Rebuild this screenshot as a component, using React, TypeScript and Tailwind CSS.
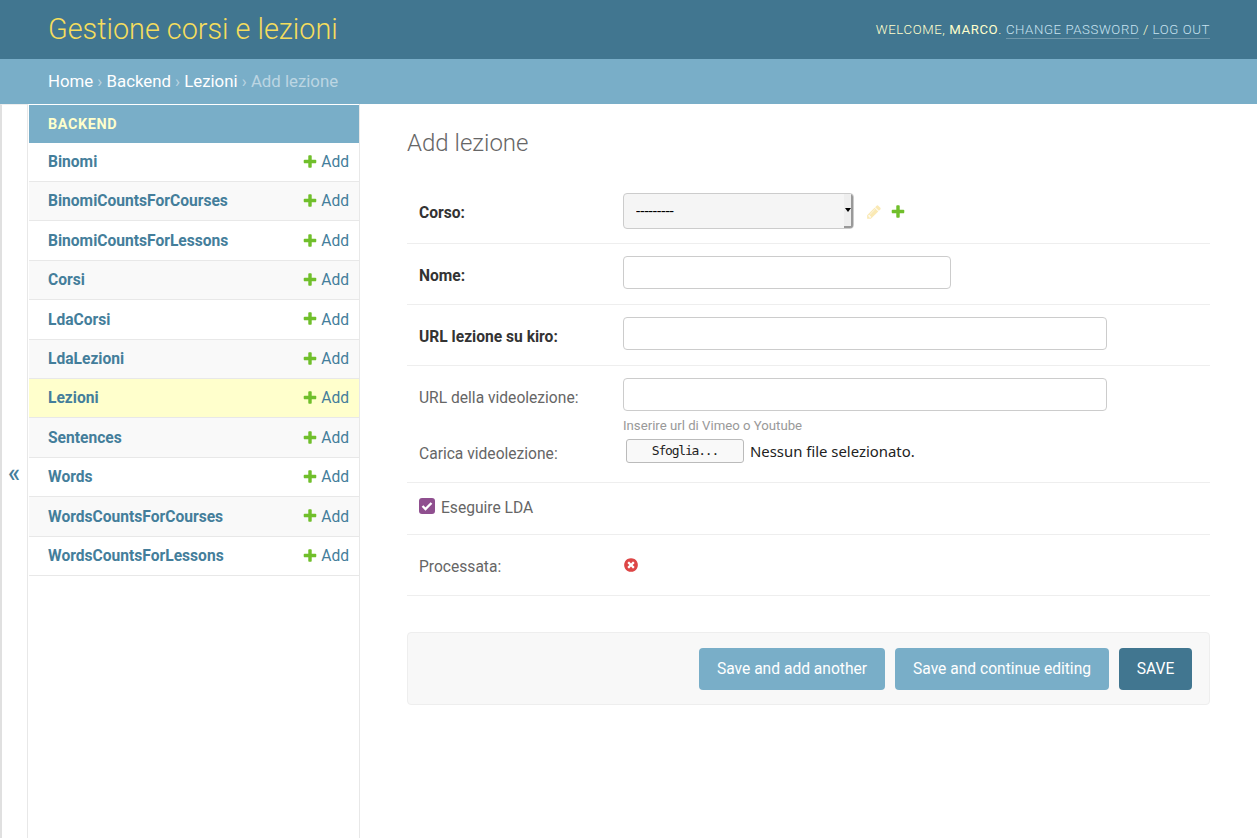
const models = [
  "Binomi",
  "BinomiCountsForCourses",
  "BinomiCountsForLessons",
  "Corsi",
  "LdaCorsi",
  "LdaLezioni",
  "Lezioni",
  "Sentences",
  "Words",
  "WordsCountsForCourses",
  "WordsCountsForLessons",
];

function PlusIcon() {
  return (
    <svg width="16" height="16" viewBox="0 0 1792 1792" aria-hidden="true">
      <path
        fill="#70bf2b"
        d="M1600 736v192q0 40-28 68t-68 28h-416v416q0 40-28 68t-68 28h-192q-40 0-68-28t-28-68v-416h-416q-40 0-68-28t-28-68v-192q0-40 28-68t68-28h416v-416q0-40 28-68t68-28h192q40 0 68 28t28 68v416h416q40 0 68 28t28 68z"
      />
    </svg>
  );
}

function PencilIcon() {
  return (
    <svg width="16" height="16" viewBox="0 0 1792 1792" aria-hidden="true" className="opacity-30">
      <path
        fill="#efb80b"
        d="M491 1536l91-91-235-235-91 91v107h128v128h107zm523-928q0-22-22-22-10 0-17 7l-542 542q-7 7-7 17 0 22 22 22 10 0 17-7l542-542q7-7 7-17zm-54-192l416 416-832 832h-416v-416zm683 96q0 53-37 90l-166 166-416-416 166-165q36-38 90-38 53 0 91 38l235 234q37 39 37 91z"
      />
    </svg>
  );
}

function NoIcon() {
  return (
    <svg width="16" height="16" viewBox="0 0 1792 1792" aria-hidden="true">
      <path
        fill="#dd4646"
        d="M1277 1122q0-26-19-45l-181-181 181-181q19-19 19-45 0-27-19-46l-90-90q-19-19-46-19-26 0-45 19l-181 181-181-181q-19-19-45-19-27 0-46 19l-90 90q-19 19-19 46 0 26 19 45l181 181-181 181q-19 19-19 45 0 27 19 46l90 90q19 19 46 19 26 0 45-19l181-181 181 181q19 19 45 19 27 0 46-19l90-90q19-19 19-46zm387-226q0 209-103 385.5t-279.5 279.5-385.5 103-385.5-103-279.5-279.5-103-385.5 103-385.5 279.5-279.5 385.5-103 385.5 103 279.5 279.5 103 385.5z"
      />
    </svg>
  );
}

function Sidebar() {
  return (
    <div className="ml-px w-[331px] shrink-0 border-r border-[#e8e8e8] pt-px">
      <div className="h-[37.6px] bg-[#79aec8] pt-px pl-[19px] text-[14.4px] leading-[38px] font-bold tracking-[0.6px] text-[#ffc]">
        BACKEND
      </div>
      {models.map((name, i) => (
        <div
          key={name}
          className={`flex h-[39.4px] items-center justify-between border-b border-[#e8e8e8] pt-[2px] pr-[10px] pl-[19px] text-[15.6px] ${
            name === "Lezioni" ? "bg-[#ffffcc]" : i % 2 === 1 ? "bg-[#f9f9f9]" : "bg-white"
          }`}
        >
          <a className="font-bold text-[#447e9b]">{name}</a>
          <span className="flex items-center gap-[3px] text-[#447e9b]">
            <span className="-mt-[2px]">
              <PlusIcon />
            </span>
            Add
          </span>
        </div>
      ))}
    </div>
  );
}

export default function App() {
  return (
    <div className="flex min-h-[838px] flex-col bg-white font-['Roboto',sans-serif] text-[#333]">
      {/* Header */}
      <div className="flex h-[59px] items-center justify-between bg-[#417690] pr-[47px] pl-[48px]">
        <h1 className="text-[28.8px] font-light text-[#f5dd5d]">Gestione corsi e lezioni</h1>
        <div className="text-[13.2px] font-light tracking-[0.6px] text-[#ffc]">
          WELCOME, <strong className="font-normal">MARCO</strong>.{" "}
          <a className="border-b border-white/25 pb-px text-[#c8e2ef]">CHANGE PASSWORD</a> /{" "}
          <a className="border-b border-white/25 pb-px text-[#c8e2ef]">LOG OUT</a>
        </div>
      </div>

      {/* Breadcrumbs */}
      <div className="flex h-[45px] items-center bg-[#79aec8] pl-[48px] text-[16.8px] whitespace-pre text-white/50">
        <a className="text-white">Home</a>
        {" › "}
        <a className="text-white">Backend</a>
        {" › "}
        <a className="text-white">Lezioni</a>
        {" › "}
        <span>Add lezione</span>
      </div>

      <div className="flex flex-1">
        {/* Toggle */}
        <div className="flex w-[28px] shrink-0 items-center justify-center border-t border-r border-l-2 border-t-[#eee] border-r-[#e8e8e8] border-l-[#e0e0e0] pt-[4px] pr-px text-[25px] leading-none font-medium text-[#447e9b]">
          «
        </div>

        <Sidebar />

        {/* Content */}
        <div className="flex-1 pt-[24px] pr-[47px] pl-[47px]">
          <h2 className="mb-[24px] h-[30px] text-[24px] leading-[30px] font-light text-[#666]">Add lezione</h2>

          <div className="text-[15.6px]">
            <div className="flex h-[62px] items-start border-b border-[#eee] px-3 pt-[11px]">
              <label className="w-[204px] shrink-0 pt-[9px] font-bold">Corso:</label>
              <div className="relative h-[36px] w-[231px] overflow-hidden rounded-[4px] border border-[#ccc] bg-[#f5f5f5]">
                <select className="h-full w-full appearance-none pl-[12px] text-[15.2px] text-black outline-none">
                  <option>---------</option>
                </select>
                <div className="absolute top-0 right-0 bottom-0 flex w-[9px] items-center justify-center border-r-2 border-b-2 border-[#999] bg-[#eee]">
                  <div className="h-0 w-0 border-x-[3px] border-t-[4px] border-x-transparent border-t-black" />
                </div>
              </div>
              <span className="mt-[11px] ml-[12px]">
                <PencilIcon />
              </span>
              <span className="mt-[11px] ml-[8px]">
                <PlusIcon />
              </span>
            </div>

            <div className="flex h-[61px] items-start border-b border-[#eee] px-3 pt-[12px]">
              <label className="w-[204px] shrink-0 pt-[9px] font-bold">Nome:</label>
              <input className="h-[33px] w-[328px] rounded-[4px] border border-[#ccc]" />
            </div>

            <div className="flex h-[61px] items-start border-b border-[#eee] px-3 pt-[12px]">
              <label className="w-[204px] shrink-0 pt-[9px] font-bold">URL lezione su kiro:</label>
              <input className="h-[33px] w-[484px] rounded-[4px] border border-[#ccc]" />
            </div>

            <div className="h-[117px] border-b border-[#eee] px-3 pt-[12px]">
              <div className="flex items-start">
                <label className="w-[204px] shrink-0 pt-[9px] text-[#666]">URL della videolezione:</label>
                <div>
                  <input className="block h-[33px] w-[484px] rounded-[4px] border border-[#ccc]" />
                  <p className="mt-[7px] text-[13.2px] leading-[15px] text-[#999]">Inserire url di Vimeo o Youtube</p>
                </div>
              </div>
              <div className="mt-[6px] flex items-start">
                <label className="w-[204px] shrink-0 pt-[4px] text-[#666]">Carica videolezione:</label>
                <button className="ml-[3px] h-[24px] w-[118px] rounded-[3px] border border-[#bbb] bg-[#f9f9f9] font-['DejaVu_Sans_Mono',monospace] text-[13px] tracking-[-1.2px] text-[#222]">
                  Sfoglia...
                </button>
                <span className="ml-[6px] font-['Noto_Sans',sans-serif] text-[14.9px] leading-[24px] text-[#222]">
                  Nessun file selezionato.
                </span>
              </div>
            </div>

            <div className="flex h-[52px] items-start border-b border-[#eee] px-3 pt-[15px]">
              <span className="flex h-[16px] w-[16px] items-center justify-center rounded-[3px] bg-[#8f4f8f]">
                <svg width="14" height="14" viewBox="0 0 14 14" fill="none" stroke="white" strokeWidth="2.4" aria-hidden="true">
                  <path d="M2.5 7l3 3 6-6" />
                </svg>
              </span>
              <label className="mt-[2px] ml-[6px] leading-[16px] text-[#666]">Eseguire LDA</label>
            </div>

            <div className="flex h-[61px] items-start border-b border-[#eee] px-3 pt-[22px]">
              <label className="w-[204px] shrink-0 leading-[20px] text-[#666]">Processata:</label>
              <span>
                <NoIcon />
              </span>
            </div>
          </div>

          {/* Submit row */}
          <div className="mt-[36px] flex h-[73px] items-center justify-end gap-[10px] rounded-[4px] border border-[#eee] bg-[#f8f8f8] pr-[17px] text-[15.6px] text-white">
            <button className="h-[42px] w-[186px] rounded-[4px] bg-[#79aec8] pt-[2px]">Save and add another</button>
            <button className="h-[42px] w-[214px] rounded-[4px] bg-[#79aec8] pt-[2px]">Save and continue editing</button>
            <button className="h-[42px] w-[73px] rounded-[4px] bg-[#417690] pt-[2px]">SAVE</button>
          </div>
        </div>
      </div>
    </div>
  );
}
